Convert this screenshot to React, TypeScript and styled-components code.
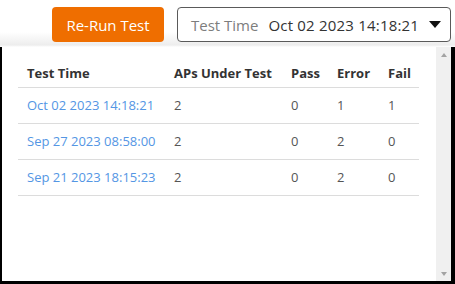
import styled, { createGlobalStyle } from "styled-components";

const GlobalStyle = createGlobalStyle`
  html, body {
    margin: 0;
    padding: 0;
    background: #fff;
  }
  body {
    font-family: "Open Sans", "Liberation Sans", sans-serif;
    overflow: hidden;
  }
`;

const Page = styled.div`
  width: 455px;
  height: 284px;
  display: flex;
  flex-direction: column;
  box-sizing: border-box;
`;

const Toolbar = styled.div`
  height: 47px;
  flex: none;
  display: flex;
  align-items: flex-start;
  justify-content: flex-end;
  gap: 13px;
  padding: 7px 4px 0 0;
  box-sizing: border-box;
  background: linear-gradient(#fff 0, #fff 32px, #ededed 45px, #fff 47px);
`;

const RunButton = styled.button`
  width: 112px;
  height: 35px;
  border: none;
  border-radius: 4px;
  background: #ef6e00;
  color: #fff;
  font-family: inherit;
  font-size: 15px;
  padding: 0;
  cursor: pointer;
`;

const Picker = styled.div`
  width: 274px;
  height: 35px;
  box-sizing: border-box;
  border: 1px solid #5a5a5a;
  border-radius: 4px;
  background: #fff;
  display: flex;
  align-items: center;
  padding: 0 9px 0 13px;
  font-size: 15px;
`;

const PickerLabel = styled.span`
  color: #7d7d7d;
  margin-right: 10px;
`;

const PickerValue = styled.span`
  color: #333;
  flex: 1;
  letter-spacing: 0.2px;
`;

const Caret = styled.span`
  width: 0;
  height: 0;
  border-left: 6.5px solid transparent;
  border-right: 6.5px solid transparent;
  border-top: 7px solid #111;
`;

const Panel = styled.div`
  flex: 1;
  min-height: 0;
  display: flex;
  border-left: 2px solid #000;
  border-right: 4px solid #000;
  border-bottom: 3px solid #000;
`;

const Content = styled.div`
  flex: 1;
  padding: 10px 17px 0 16px;
`;

const Track = styled.div`
  width: 15px;
  flex: none;
  background: #f0f0f0;
  display: flex;
  flex-direction: column;
  align-items: center;
  justify-content: space-between;
  padding: 6px 0 5px;
  box-sizing: border-box;
`;

const Arrow = styled.span<{ $down?: boolean }>`
  width: 0;
  height: 0;
  border-left: 3.5px solid transparent;
  border-right: 3.5px solid transparent;
  ${(p) =>
    p.$down
      ? "border-top: 4px solid #a3a3a3;"
      : "border-bottom: 4px solid #a3a3a3;"}
`;

const Row = styled.div<{ $head?: boolean }>`
  display: grid;
  grid-template-columns: 147px 117px 46px 51px 40px;
  border-bottom: 1px solid #dcdcdc;
  height: ${(p) => (p.$head ? "31px" : "36px")};
  align-items: ${(p) => (p.$head ? "end" : "center")};
  padding-bottom: ${(p) => (p.$head ? "6px" : "0")};
  box-sizing: border-box;
  font-size: 13px;
  line-height: 15px;
  font-weight: ${(p) => (p.$head ? 700 : 400)};
  color: ${(p) => (p.$head ? "#333" : "#555")};
`;

const Cell = styled.div`
  padding-left: 9px;
  white-space: nowrap;
`;

const Link = styled.a`
  color: #5496e4;
  text-decoration: none;
  cursor: pointer;
`;

const runs = [
  { time: "Oct 02 2023 14:18:21", aps: 2, pass: 0, error: 1, fail: 1 },
  { time: "Sep 27 2023 08:58:00", aps: 2, pass: 0, error: 2, fail: 0 },
  { time: "Sep 21 2023 18:15:23", aps: 2, pass: 0, error: 2, fail: 0 },
];

export default function App() {
  return (
    <Page>
      <GlobalStyle />
      <Toolbar>
        <RunButton>Re-Run Test</RunButton>
        <Picker>
          <PickerLabel>Test Time</PickerLabel>
          <PickerValue>Oct 02 2023 14:18:21</PickerValue>
          <Caret />
        </Picker>
      </Toolbar>
      <Panel>
        <Content>
          <Row $head>
            <Cell>Test Time</Cell>
            <Cell>APs Under Test</Cell>
            <Cell>Pass</Cell>
            <Cell>Error</Cell>
            <Cell>Fail</Cell>
          </Row>
          {runs.map((r) => (
            <Row key={r.time}>
              <Cell>
                <Link>{r.time}</Link>
              </Cell>
              <Cell>{r.aps}</Cell>
              <Cell>{r.pass}</Cell>
              <Cell>{r.error}</Cell>
              <Cell>{r.fail}</Cell>
            </Row>
          ))}
        </Content>
        <Track>
          <Arrow />
          <Arrow $down />
        </Track>
      </Panel>
    </Page>
  );
}
